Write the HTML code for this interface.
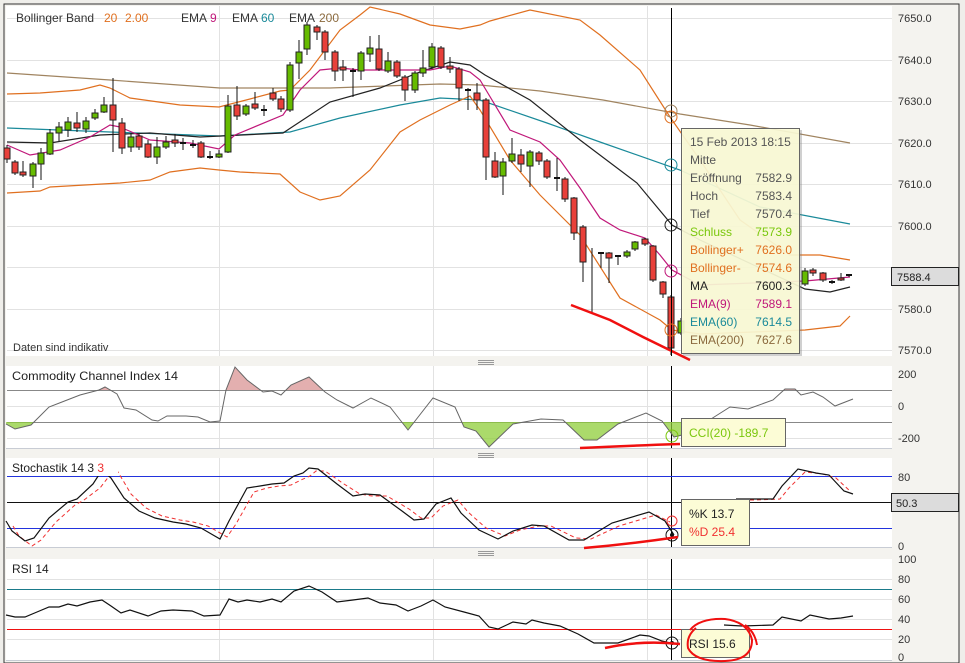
<!DOCTYPE html>
<html><head><meta charset="utf-8"><style>
html,body{margin:0;padding:0;background:#efeeea;}
svg{display:block;font-family:"Liberation Sans",sans-serif;}
</style></head><body>
<svg width="965" height="663" viewBox="0 0 965 663" xmlns="http://www.w3.org/2000/svg" xml:space="preserve">
<rect x="0" y="0" width="965" height="663" fill="#efeeea"/>
<rect x="4" y="4" width="955" height="659" fill="#f4f3ef" stroke="#333" stroke-width="1"/>
<rect x="6" y="6" width="886" height="350" fill="#fff"/>
<g stroke="#e2e2e2" stroke-width="1">
<path d="M7 18.5H892M7 60.5H892M7 101.5H892M7 143.5H892M7 184.5H892M7 226.5H892M7 267.5H892M7 309.5H892M7 350.5H892"/>
<path d="M219.5 6V356M433.5 6V356M647.5 6V356"/>
</g>
<rect x="6" y="366" width="886" height="82" fill="#fff"/>
<rect x="6" y="458" width="886" height="89" fill="#fff"/>
<rect x="6" y="559" width="886" height="101" fill="#fff"/>
<g stroke="#e2e2e2"><path d="M219.5 366V448M433.5 366V448M647.5 366V448M219.5 458V547M433.5 458V547M647.5 458V547M219.5 559V660M433.5 559V660M647.5 559V660"/>
<path d="M7 406.5H892M7 438.5H892M7 579.5H892M7 599.5H892M7 619.5H892M7 639.5H892"/></g>
<path d="M6 547.5H892M6 660.5H892M6 448.5H892" stroke="#c8ccd4"/>
<g stroke="#999"><path d="M478 360.5h16M478 362.5h16M478 364.5h16M478 453.5h16M478 455.5h16M478 457.5h16M478 551.5h16M478 553.5h16M478 555.5h16"/></g>

<g font-size="12" fill="#333">
<text x="16" y="22">Bollinger Band</text><text x="104" y="22" fill="#e07020">20</text><text x="125" y="22" fill="#e07020">2.00</text>
<text x="181" y="22">EMA</text><text x="210" y="22" fill="#c0187a">9</text>
<text x="232" y="22">EMA</text><text x="261" y="22" fill="#1a8a9a">60</text>
<text x="289" y="22">EMA</text><text x="319" y="22" fill="#8b6a3e">200</text>
<text x="13" y="351" font-size="11">Daten sind indikativ</text>
</g>

<g fill="none" stroke-width="1.2">
<polyline stroke="#a08460" points="7,73 110,80 220,88 330,88 440,84 480,85 540,91 603,100 680,114 750,125 850,143"/>
<polyline stroke="#1a8a9a" points="7,128 110,132 220,136 290,132 340,118 400,105 440,98 480,100 547,123 600,142 680,170 760,207 850,224"/>
<polyline stroke="#e07020" points="7,94 40,93 80,90 100,85 110,88 130,98 180,105 219,107 250,99 280,91 290,90 310,70 340,30 360,15 370,7 400,14 430,25 460,29 480,25 490,21 530,10 580,20 600,35 640,70 670,117 700,160 740,220 790,255 820,255 850,260"/>
<polyline stroke="#e07020" points="7,193 40,191 50,187 120,183 150,180 170,172 200,168 219,170 240,172 280,174 300,192 320,200 340,196 370,170 400,132 420,120 450,105 470,96 480,110 510,160 540,195 580,235 620,298 660,320 672,330 700,334 805,330 840,326 850,316"/>
<polyline stroke="#222" points="7,142 50,143 100,135 150,133 200,137 283,133 330,102 380,88 420,72 450,62 470,65 485,75 530,100 580,140 637,183 672,225 700,240 805,289 830,292 850,287"/>
<polyline stroke="#c0187a" points="7,145 30,155 60,150 90,137 110,125 120,127 150,140 190,143 219,149 235,135 283,115 300,90 320,70 340,68 360,70 400,70 430,70 450,66 470,72 480,80 510,130 540,142 560,160 580,188 600,218 620,230 645,238 660,255 672,270 700,285 805,281 850,277"/>
</g>

<path fill="none" stroke="#111" stroke-width="1" d="M7 145V163M15 160V175M23 161V177M33 162V188M41 148V180M50 129V155M59 122V141M68 117V137M77 112V132M86 117V133M95 109V120M104 97V113M113 78V152M122 118V154M131 133V152M139 134V150M148 140V158M157 137V164M166 136V149M175 134V147M183 138V150M193 140V148M201 141V158M210 151V159M219 150V158M228 95V153M237 86V120M246 104V116M255 92V110M264 105V116M273 88V101M281 96V112M290 62V112M299 40V79M307 22V55M317 25V40M325 30V60M335 50V81M343 60V81M353 68V97M361 51V80M370 36V62M379 35V71M388 52V73M397 60V78M405 75V101M415 71V93M423 50V77M432 43V69M441 46V69M450 57V73M459 67V101M468 88V110M477 83V110M486 98V180M495 152V178M503 158V195M512 138V163M521 149V172M530 150V187M539 151V165M547 159V179M557 158V191M565 177V202M574 197V240M583 225V282M592 248V313M601 252V268M609 252V283M618 255V265M627 250V258M635 241V251M645 238V246M653 245V282M663 281V298M671 295V355M681 318V335M805 268V286M813 268V276M823 272V282M832 280V284M841 273V281M849 274V277"/>
<path fill="none" stroke="#111" stroke-width="2" d="M180 143h6M190 145h6M207 157h6M261 110h6M350 71h6M554 178h6M598 253h6M615 256h6M465 90h6M829 282h6M846 275h6"/>
<path fill="#e8403a" stroke="#222" stroke-width="1" d="M4 148h6v11h-6zM12 162h6v11h-6zM20 172h6v3h-6zM74 123h6v5h-6zM110 105h6v15h-6zM119 123h6v25h-6zM136 136h6v11h-6zM145 144h6v13h-6zM172 140h6v3h-6zM198 143h6v14h-6zM234 105h6v11h-6zM252 104h6v4h-6zM270 93h6v6h-6zM278 99h6v10h-6zM314 27h6v5h-6zM322 32h6v20h-6zM332 52h6v19h-6zM340 67h6v3h-6zM376 49h6v20h-6zM394 62h6v14h-6zM402 77h6v13h-6zM438 48h6v19h-6zM447 66h6v3h-6zM456 69h6v19h-6zM474 93h6v7h-6zM483 100h6v57h-6zM492 161h6v16h-6zM518 155h6v9h-6zM536 153h6v8h-6zM544 161h6v16h-6zM562 179h6v20h-6zM571 198h6v35h-6zM580 227h6v35h-6zM606 253h6v5h-6zM642 239h6v5h-6zM650 246h6v34h-6zM660 282h6v12h-6zM668 297h6v51h-6zM810 270h6v3h-6zM820 273h6v7h-6zM838 278h6v2h-6z"/>
<path fill="#66bb00" stroke="#222" stroke-width="1" d="M30 164h6v12h-6zM38 153h6v11h-6zM47 133h6v21h-6zM56 127h6v6h-6zM65 122h6v8h-6zM83 121h6v8h-6zM92 113h6v5h-6zM101 105h6v7h-6zM128 137h6v10h-6zM154 147h6v10h-6zM163 142h6v5h-6zM216 154h6v3h-6zM225 106h6v46h-6zM243 106h6v8h-6zM287 65h6v45h-6zM296 52h6v11h-6zM304 25h6v24h-6zM358 53h6v18h-6zM367 48h6v6h-6zM385 61h6v10h-6zM412 73h6v17h-6zM420 68h6v5h-6zM429 47h6v20h-6zM500 162h6v14h-6zM509 154h6v7h-6zM527 152h6v14h-6zM624 252h6v4h-6zM632 242h6v7h-6zM678 321h6v12h-6zM802 271h6v13h-6z"/>

<path d="M571 305 L610 320 L643 337 L690 360" stroke="#f01010" stroke-width="2.5" fill="none"/>

<path d="M671.5 8V356M671.5 366V448M671.5 458V547M671.5 559V660" stroke="#000" stroke-width="1"/>
<g fill="none" stroke-width="1">
<circle cx="671" cy="111" r="6" stroke="#a08460"/><circle cx="671" cy="117" r="6" stroke="#e07020"/>
<circle cx="671" cy="165" r="6" stroke="#1a8a9a"/><circle cx="671" cy="225" r="6" stroke="#222"/>
<circle cx="671" cy="271" r="6" stroke="#c0187a"/><circle cx="671" cy="330" r="6" stroke="#e07020"/>
</g>

<rect x="683" y="130" width="119" height="226" fill="#777" opacity="0.35"/>
<rect x="681.5" y="128.5" width="118" height="225" fill="#fcfcd6" fill-opacity="0.9" stroke="#666"/>
<g font-size="12">
<text x="690" y="146" fill="#555">15 Feb 2013 18:15</text>
<text x="690" y="164" fill="#555">Mitte</text>
<g fill="#555"><text x="690" y="182">Eröffnung</text><text x="792" y="182" text-anchor="end">7582.9</text>
<text x="690" y="200">Hoch</text><text x="792" y="200" text-anchor="end">7583.4</text>
<text x="690" y="218">Tief</text><text x="792" y="218" text-anchor="end">7570.4</text></g>
<g fill="#7ac70c"><text x="690" y="236">Schluss</text><text x="792" y="236" text-anchor="end">7573.9</text></g>
<g fill="#e07020"><text x="690" y="254">Bollinger+</text><text x="792" y="254" text-anchor="end">7626.0</text>
<text x="690" y="272">Bollinger-</text><text x="792" y="272" text-anchor="end">7574.6</text></g>
<g fill="#222"><text x="690" y="290">MA</text><text x="792" y="290" text-anchor="end">7600.3</text></g>
<g fill="#c0187a"><text x="690" y="308">EMA(9)</text><text x="792" y="308" text-anchor="end">7589.1</text></g>
<g fill="#1a8a9a"><text x="690" y="326">EMA(60)</text><text x="792" y="326" text-anchor="end">7614.5</text></g>
<g fill="#8b6a3e"><text x="690" y="344">EMA(200)</text><text x="792" y="344" text-anchor="end">7627.6</text></g>
</g>

<g font-size="11" fill="#333">
<text x="898" y="22">7650.0</text><text x="898" y="64">7640.0</text><text x="898" y="105">7630.0</text><text x="898" y="147">7620.0</text><text x="898" y="188">7610.0</text><text x="898" y="230">7600.0</text><text x="898" y="313">7580.0</text><text x="898" y="354">7570.0</text>
</g>
<rect x="891.5" y="267.5" width="67" height="18" fill="#dcdcdc" stroke="#222"/>
<text x="897" y="281" font-size="11" fill="#222">7588.4</text>

<defs>
<clipPath id="cA"><rect x="6" y="366" width="886" height="24"/></clipPath>
<clipPath id="cB"><rect x="6" y="422" width="886" height="30"/></clipPath>
</defs>
<path d="M7 390.5H892M7 422.5H892" stroke="#888"/>
<g>
<polygon clip-path="url(#cA)" fill="#d99494" opacity="0.75" points="6,390 6,424 15,429 31,425 49,407 62,402 80,395 99,390 105,387 117,394 124,408 136,410 152,420 158,421 167,416 186,416 198,417 210,422 220,421 226,390 235,367 247,380 263,392 272,391 281,395 291,385 309,377 325,392 337,400 353,408 371,398 390,407 408,430 433,398 455,407 464,427 476,431 489,447 513,424 541,419 563,420 584,440 597,440 618,424 646,413 662,421 674,437 686,434 711,419 730,407 748,409 773,400 785,389 795,389 801,395 813,392 823,397 835,406 853,399 853,390"/>
<polygon clip-path="url(#cB)" fill="#8fce3a" opacity="0.75" points="6,422 6,424 15,429 31,425 49,407 62,402 80,395 99,390 105,387 117,394 124,408 136,410 152,420 158,421 167,416 186,416 198,417 210,422 220,421 226,390 235,367 247,380 263,392 272,391 281,395 291,385 309,377 325,392 337,400 353,408 371,398 390,407 408,430 433,398 455,407 464,427 476,431 489,447 513,424 541,419 563,420 584,440 597,440 618,424 646,413 662,421 674,437 686,434 711,419 730,407 748,409 773,400 785,389 795,389 801,395 813,392 823,397 835,406 853,399 853,422"/>
<polyline fill="none" stroke="#666" stroke-width="1" points="6,424 15,429 31,425 49,407 62,402 80,395 99,390 105,387 117,394 124,408 136,410 152,420 158,421 167,416 186,416 198,417 210,422 220,421 226,390 235,367 247,380 263,392 272,391 281,395 291,385 309,377 325,392 337,400 353,408 371,398 390,407 408,430 433,398 455,407 464,427 476,431 489,447 513,424 541,419 563,420 584,440 597,440 618,424 646,413 662,421 674,437 686,434 711,419 730,407 748,409 773,400 785,389 795,389 801,395 813,392 823,397 835,406 853,399"/>
</g>
<rect x="8" y="368" width="170" height="16" fill="#fff"/>
<text x="12" y="380" font-size="12" fill="#222" textLength="166" lengthAdjust="spacingAndGlyphs">Commodity Channel Index  14</text>
<circle cx="672" cy="436" r="6" fill="none" stroke="#7ac70c"/>
<path d="M580 448 Q620 446 680 444" stroke="#f01010" stroke-width="2.5" fill="none"/>
<rect x="681.5" y="418.5" width="104" height="28" fill="#fcfcd6" stroke="#666"/>
<text x="689" y="437" font-size="12" fill="#7ac70c">CCI(20)  -189.7</text>
<g font-size="11" fill="#333"><text x="898" y="378">200</text><text x="898" y="410">0</text><text x="898" y="442">-200</text></g>

<path d="M7 476.5H892M7 528.5H892" stroke="#2233dd"/>
<path d="M7 502.5H892" stroke="#111"/>
<polyline fill="none" stroke="#f03030" stroke-width="1" stroke-dasharray="4,3" points="13,526 19,536 32,546 41,540 56,522 75,505 84,500 100,488 110,475 118,472 131,494 146,508 162,516 180,520 193,522 208,526 227,537 236,524 254,492 267,488 279,486 291,485 301,480 310,476 316,471 325,471 344,484 360,494 372,496 387,496 409,509 421,518 431,518 443,506 458,500 468,512 486,528 505,536 520,530 539,526 551,526 576,538 591,539 619,526 656,515 670,522"/>
<polyline fill="none" stroke="#f03030" stroke-width="1" stroke-dasharray="4,3" points="743,500 755,500 780,499 789,488 805,472 823,474 836,478 851,492"/>
<polyline fill="none" stroke="#111" stroke-width="1.2" points="6,521 12,531 25,541 34,538 49,518 68,502 77,499 93,484 102,470 111,478 124,498 139,511 155,518 173,522 186,524 201,528 220,539 229,521 247,488 260,486 272,484 284,483 294,476 303,473 309,468 318,469 337,484 353,496 365,494 380,495 402,511 414,520 424,519 436,504 451,498 461,513 479,530 498,539 513,531 532,525 544,526 569,540 584,540 612,523 649,512 665,521 674,535"/>
<polyline fill="none" stroke="#111" stroke-width="1.2" points="736,499 748,499 773,499 782,486 798,469 816,473 829,475 844,491 853,494"/>
<rect x="8" y="460" width="110" height="16" fill="#fff"/>
<text x="12" y="472" font-size="12" fill="#222">Stochastik  14  3  <tspan fill="#f03030">3</tspan></text>
<circle cx="672" cy="521" r="5" fill="none" stroke="#f03030"/>
<circle cx="672" cy="535" r="6" fill="none" stroke="#111"/><circle cx="672" cy="535" r="2" fill="#111"/>
<path d="M584 548 Q630 544 678 537" stroke="#f01010" stroke-width="2.5" fill="none"/>
<rect x="681.5" y="499.5" width="68" height="46" fill="#fcfcd6" stroke="#666"/>
<text x="689" y="518" font-size="12" fill="#222">%K  13.7</text>
<text x="689" y="536" font-size="12" fill="#f03030">%D  25.4</text>
<g font-size="11" fill="#333"><text x="898" y="481">80</text><text x="898" y="550">0</text></g>
<rect x="891.5" y="493.5" width="67" height="18" fill="#dcdcdc" stroke="#222"/>
<text x="896" y="507" font-size="11" fill="#222">50.3</text>

<path d="M7 589.5H892" stroke="#1a7a8a"/>
<path d="M7 629.5H892" stroke="#ee1111"/>
<polyline fill="none" stroke="#111" stroke-width="1.2" points="6,615 15,617 25,617 37,612 49,607 59,607 68,604 77,606 90,602 102,600 111,606 121,613 130,610 148,616 161,611 173,610 192,611 204,616 220,615 229,599 238,602 247,600 260,602 272,599 281,602 294,591 309,586 322,592 337,602 353,600 368,598 380,603 396,605 408,611 421,606 433,600 445,607 464,612 479,616 489,627 498,629 513,622 526,624 532,620 544,623 560,626 578,634 594,643 618,643 640,635 649,636 662,641 674,644"/>
<polyline fill="none" stroke="#111" stroke-width="1.2" points="724,625 742,626 773,625 782,617 801,621 810,615 829,619 841,618 853,616"/>
<rect x="8" y="561" width="50" height="16" fill="#fff"/>
<text x="12" y="573" font-size="12" fill="#222">RSI  14</text>
<circle cx="672" cy="643" r="6" fill="none" stroke="#111"/><circle cx="672" cy="643" r="2" fill="#111"/>
<path d="M605 648 Q640 640 680 644" stroke="#f01010" stroke-width="2.5" fill="none"/>
<rect x="681.5" y="629.5" width="68" height="28" fill="#fcfcd6" stroke="#666"/>
<text x="689" y="648" font-size="12" fill="#222">RSI  15.6</text>
<path d="M690 630 Q700 618 725 619 Q748 622 752 640 Q752 660 725 661 Q695 662 688 648 Q686 636 696 628" stroke="#f01010" stroke-width="2" fill="none"/>
<path d="M745 625 Q755 632 757 645" stroke="#f01010" stroke-width="2" fill="none"/>
<g font-size="11" fill="#333"><text x="898" y="563">100</text><text x="898" y="583">80</text><text x="898" y="603">60</text><text x="898" y="623">40</text><text x="898" y="643">20</text><text x="898" y="661">0</text></g>
</svg>
</body></html>
